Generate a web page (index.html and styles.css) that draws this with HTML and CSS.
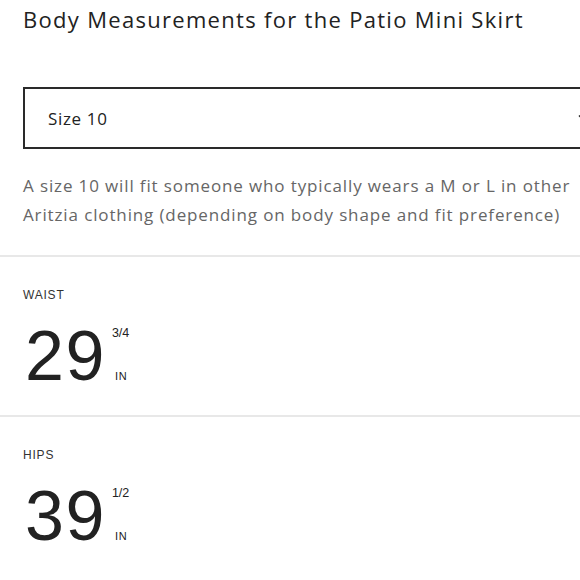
FILE: index.html
```html
<!DOCTYPE html>
<html lang="en">
<head>
<meta charset="utf-8">
<title>Body Measurements</title>
<link rel="stylesheet" href="styles.css">
</head>
<body>
<div class="page">
  <div class="intro">
    <h1 class="title">Body Measurements for the Patio Mini Skirt</h1>
    <div class="select">
      <span class="select-value">Size 10</span>
      <svg class="chevron" width="12" height="8" viewBox="0 0 12 8"><path d="M1 1.5 L6 6.5 L11 1.5" fill="none" stroke="#222" stroke-width="1.5"/></svg>
    </div>
    <p class="desc">A size 10 will fit someone who typically wears a M or L in other<br>Aritzia clothing (depending on body shape and fit preference)</p>
  </div>
  <section class="measure">
    <div class="label">Waist</div>
    <div class="value">
      <span class="num">29</span>
      <span class="side"><span class="frac">3/4</span><span class="unit">IN</span></span>
    </div>
  </section>
  <section class="measure last">
    <div class="label">Hips</div>
    <div class="value">
      <span class="num">39</span>
      <span class="side"><span class="frac">1/2</span><span class="unit">IN</span></span>
    </div>
  </section>
</div>
</body>
</html>
```
FILE: styles.css
```css
html, body {
  margin: 0;
  padding: 0;
  background: #fff;
  overflow: hidden;
}
.page {
  width: 580px;
  font-family: "Open Sans", "Liberation Sans", sans-serif;
  color: #222;
}
.intro {
  padding: 0 0 0 23px;
}
.title {
  margin: 0;
  padding-top: 3px;
  font-size: 22px;
  line-height: 32px;
  font-weight: 400;
  letter-spacing: 1.3px;
  white-space: nowrap;
  color: #222;
}
.select {
  margin-top: 52px;
  width: 590px;
  box-sizing: border-box;
  height: 62px;
  border: 2px solid #2a2a2a;
  display: flex;
  align-items: center;
  justify-content: space-between;
  padding: 0 21px 0 23px;
}
.select-value {
  font-size: 17px;
  letter-spacing: 0.65px;
  color: #222;
}
.chevron {
  display: block;
}
.desc {
  margin: 22px 0 0 0;
  font-size: 17px;
  line-height: 29px;
  letter-spacing: 0.87px;
  color: #666;
  white-space: nowrap;
  padding-bottom: 26px;
}
.measure {
  border-top: 2px solid #e8e8e8;
  padding: 31px 0 28px 23px;
}
.measure.last {
  padding-bottom: 26px;
}
.label {
  font-family: "Liberation Sans", Arial, sans-serif;
  font-size: 12px;
  line-height: 14px;
  letter-spacing: 0.8px;
  text-transform: uppercase;
  color: #333;
}
.value {
  display: flex;
  align-items: stretch;
  margin-top: 23px;
}
.num {
  font-family: "Liberation Sans", Arial, sans-serif;
  font-size: 70px;
  line-height: 62px;
  color: #222;
  letter-spacing: 1.5px;
  margin-left: 2px;
}
.side {
  display: flex;
  flex-direction: column;
  justify-content: space-between;
  margin-left: 6px;
  padding: 2px 0 5px 0;
  font-family: "Liberation Sans", Arial, sans-serif;
}
.frac {
  font-size: 12.5px;
  line-height: 12px;
  color: #222;
}
.unit {
  font-size: 11px;
  line-height: 11px;
  letter-spacing: 0.8px;
  color: #222;
  padding-left: 3px;
}
```
